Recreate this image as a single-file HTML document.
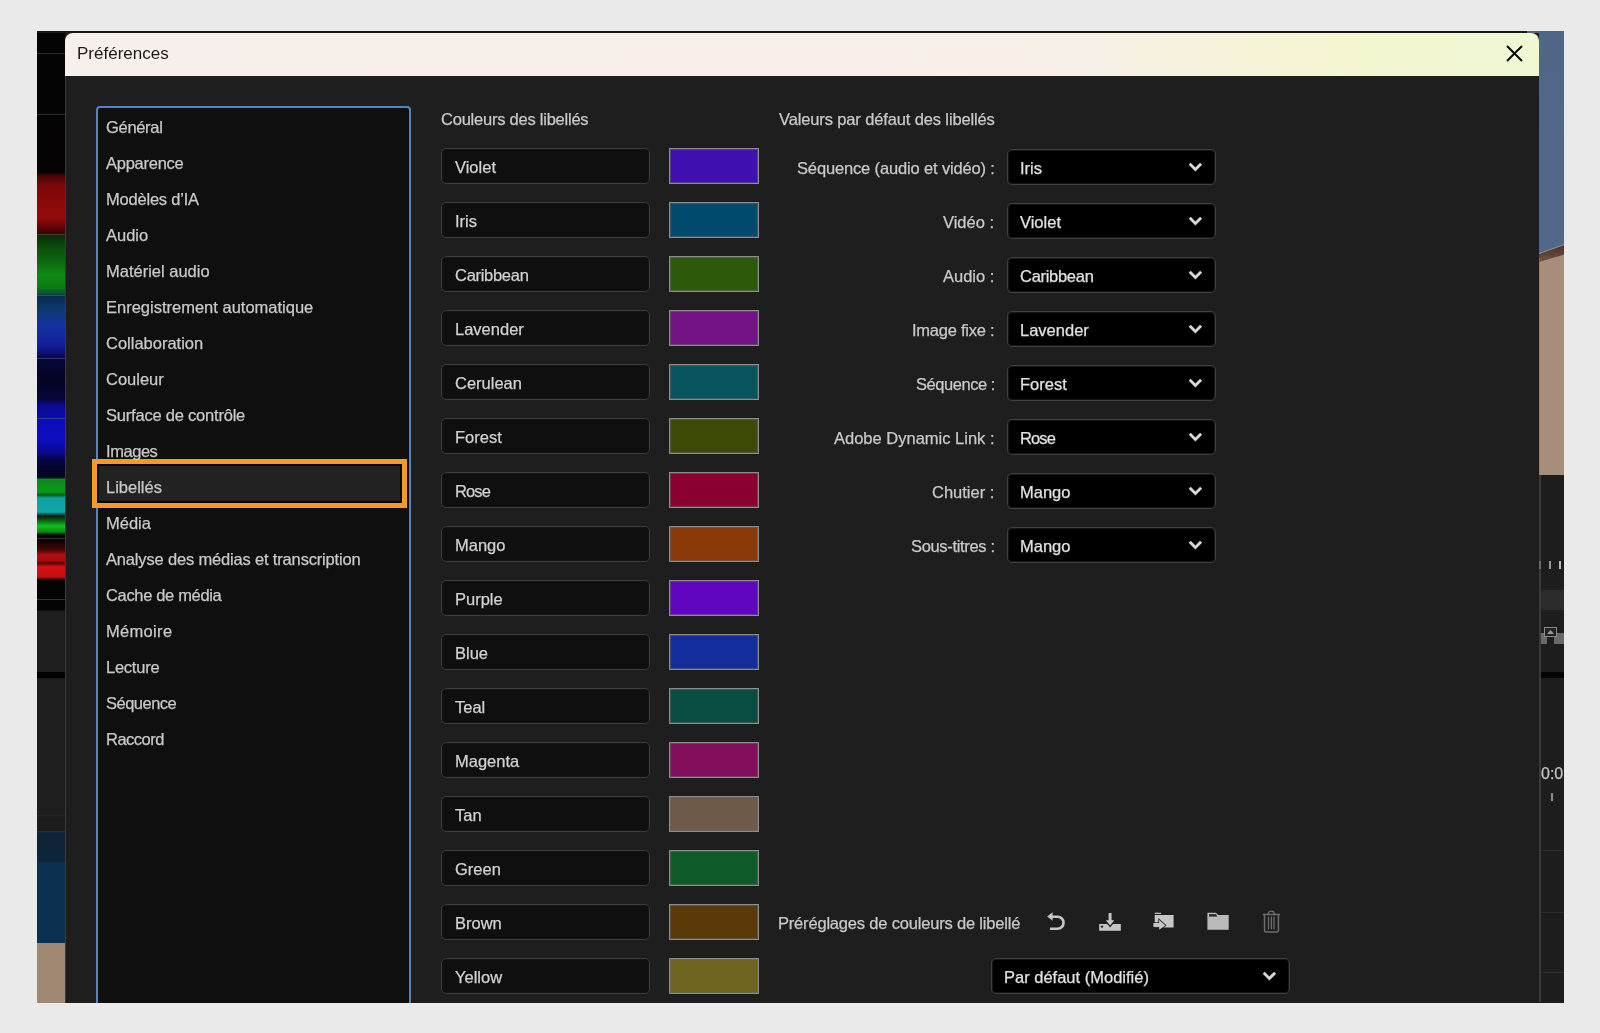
<!DOCTYPE html>
<html><head><meta charset="utf-8">
<style>
*{box-sizing:border-box;margin:0;padding:0}
html,body{width:1600px;height:1033px;overflow:hidden;background:#eaeaea;font-family:"Liberation Sans",sans-serif}
.a{position:absolute}
.tx{position:absolute;white-space:nowrap;will-change:transform;-webkit-text-stroke:0.25px currentColor}
</style></head>
<body>
<div class="a" style="left:0;top:0;width:1600px;height:1003px;overflow:hidden">
<div class="a" style="left:37px;top:31px;width:1527px;height:972px;background:#1d1d1d"></div>
<div class="a" style="left:37px;top:31px;width:28px;height:972px;background:linear-gradient(180deg,#040404 0px,#050303 141px,#4a0404 145px,#7a0808 154px,#8c0a0a 174px,#900b0b 187px,#6a0606 195px,#3a0404 202px,#0a2a0a 204px,#0a500c 217px,#0c6a10 231px,#0e8a12 244px,#0c7a14 257px,#0a4a40 263px,#0a2a50 265px,#0e3a70 279px,#1432a0 295px,#12209a 314px,#0a0a60 325px,#07073c 328px,#050522 349px,#060640 369px,#0a0a90 374px,#0c0ca8 386px,#0c0cb8 388px,#0e0ec0 409px,#0a0a90 421px,#05053a 431px,#040420 446px,#0a8a1a 449px,#0a9a1a 461px,#0a5a10 464px,#10a0a0 467px,#10a8a8 481px,#051a10 485px,#0a6a10 490px,#10c020 495px,#0a8a10 501px,#050505 504px,#070303 509px,#4a0505 519px,#b01010 524px,#a00c0c 530px,#5a0606 532px,#d81010 536px,#c01010 546px,#070303 549px,#040404 566px,#040404 579px,#1e1e1e 580px,#1e1e1e 641px,#000 641px,#000 647px,#1e1e1e 647px,#1e1e1e 784px,#2a2a2a 784px,#1c1c1c 786px,#1c1c1c 800px,#333 800px,#0e2438 802px,#0e2438 831px,#0c3050 831px,#0c3050 912px,#a08872 912px,#a08872 972px)"></div>
<div class="a" style="left:37px;top:234px;width:28px;height:1px;background:rgba(110,110,110,0.45)"></div>
<div class="a" style="left:37px;top:295px;width:28px;height:1px;background:rgba(110,110,110,0.45)"></div>
<div class="a" style="left:37px;top:358px;width:28px;height:1px;background:rgba(110,110,110,0.45)"></div>
<div class="a" style="left:37px;top:417.5px;width:28px;height:1px;background:rgba(110,110,110,0.45)"></div>
<div class="a" style="left:37px;top:478.5px;width:28px;height:1px;background:rgba(110,110,110,0.45)"></div>
<div class="a" style="left:37px;top:538px;width:28px;height:1px;background:rgba(110,110,110,0.45)"></div>
<div class="a" style="left:37px;top:598.5px;width:28px;height:1px;background:rgba(110,110,110,0.45)"></div>
<svg class="a" style="left:1525px;top:31px" width="39" height="444" viewBox="0 0 39 444"><defs><linearGradient id="sky" x1="0" y1="0" x2="0" y2="1"><stop offset="0" stop-color="#4f6787"/><stop offset="1" stop-color="#55698a"/></linearGradient><linearGradient id="roof" x1="0" y1="0" x2="0" y2="1"><stop offset="0" stop-color="#4a3028"/><stop offset="1" stop-color="#7a5c48"/></linearGradient></defs><rect width="39" height="444" fill="url(#sky)"/><path d="M0 235.1L39 223.6V444H0Z" fill="#a68e78"/><path d="M0 227.6L39 213.7V223.6L0 235.1Z" fill="url(#roof)"/><path d="M0 227.6L39 213.7" stroke="#9a9aa0" stroke-width="0.9"/><rect x="14" y="227" width="1" height="217" fill="#8a7a6a" opacity="0.6"/></svg>
<div class="a" style="left:37px;top:31px;width:1490px;height:2px;background:#1a1816"></div>
<div class="a" style="left:1539px;top:475px;width:2px;height:527px;background:#3a3a3a"></div>
<div class="a" style="left:1539.4px;top:561px;width:1.6px;height:8px;background:#6a6a6a"></div>
<div class="a" style="left:1549.4px;top:561px;width:1.6px;height:8px;background:#9a9a9a"></div>
<div class="a" style="left:1559.2px;top:561px;width:1.6px;height:8px;background:#bcbcbc"></div>
<div class="a" style="left:1541px;top:590px;width:23px;height:19.5px;background:#2c2c2c"></div>
<div class="a" style="left:1541px;top:633px;width:23px;height:10.5px;background:#6a6a6a"></div>
<div class="a" style="left:1544px;top:626.5px;width:13px;height:10px;border:1.3px solid #8a8a8a;background:#222"></div>
<div class="a" style="left:1547px;top:636.5px;width:7.3px;height:7px;background:#1e1e1e"></div>
<svg class="a" style="left:1546px;top:628px" width="9" height="7" viewBox="0 0 9 7"><path d="M1 6L4.5 2L8 6Z" fill="#9a9a9a"/></svg>
<div class="a" style="left:1541px;top:672px;width:23px;height:5.5px;background:#050505"></div>
<div class="a" style="left:1540.5px;top:760px;width:23.5px;height:24px;overflow:hidden"><div class="tx" style="left:0.3px;top:6.2px;font-size:16px;line-height:16px;color:#c4c4c4">0:0</div></div>
<div class="a" style="left:1550.8px;top:793px;width:2.2px;height:7.8px;background:#8c8c8c"></div>
<div class="a" style="left:1541px;top:850px;width:23px;height:1px;background:#2e2e2e"></div>
<div class="a" style="left:1541px;top:911.5px;width:23px;height:1px;background:#2e2e2e"></div>
<div class="a" style="left:1541px;top:972px;width:23px;height:1px;background:#2e2e2e"></div>
<div class="a" style="left:37px;top:53px;width:28px;height:1px;background:#2a2a2a"></div>
<div class="a" style="left:37px;top:113.5px;width:28px;height:1px;background:#2a2a2a"></div>
<div class="a" style="left:65px;top:33px;width:1474px;height:970px;background:#1e1e1e"></div>
<div class="a" style="left:65px;top:76px;width:1px;height:927px;background:#3a3a3a"></div>
<div class="a" style="left:65px;top:33px;width:1474px;height:43px;border-radius:8px 8px 0 0;background:linear-gradient(90deg,#f7efeb 0%,#f8efea 55%,#f7f0e6 70%,#f6f3d8 80%,#f4f6d0 88%,#eff7d3 100%)"></div>
<div class="tx" style="left:77px;top:44.61px;font-size:17px;line-height:17px;color:#1a1a1a;-webkit-text-stroke:0;">Préférences</div>
<svg class="a" style="left:1506px;top:45px" width="17" height="17" viewBox="0 0 17 17"><path d="M1 1L16 16M16 1L1 16" stroke="#050505" stroke-width="1.9" fill="none"/></svg>
<div class="a" style="left:96px;top:106px;width:315px;height:920px;background:#0f0f0f;border:2px solid #5384c2;border-radius:4px"></div>
<div class="a" style="left:92px;top:459px;width:315px;height:49px;border:5.3px solid #f39a2b;background:#080808"></div>
<div class="a" style="left:98.8px;top:465.5px;width:301.6px;height:35.5px;background:#222"></div>
<div class="tx" style="left:105.5px;top:119.33px;font-size:16.5px;line-height:16.5px;color:#c9c9c9;letter-spacing:-0.314px;">Général</div>
<div class="tx" style="left:105.5px;top:155.33px;font-size:16.5px;line-height:16.5px;color:#c9c9c9;letter-spacing:-0.256px;">Apparence</div>
<div class="tx" style="left:105.5px;top:191.33px;font-size:16.5px;line-height:16.5px;color:#c9c9c9;letter-spacing:-0.208px;">Modèles d’IA</div>
<div class="tx" style="left:105.5px;top:227.33px;font-size:16.5px;line-height:16.5px;color:#c9c9c9;">Audio</div>
<div class="tx" style="left:105.5px;top:263.33px;font-size:16.5px;line-height:16.5px;color:#c9c9c9;">Matériel audio</div>
<div class="tx" style="left:105.5px;top:299.33px;font-size:16.5px;line-height:16.5px;color:#c9c9c9;">Enregistrement automatique</div>
<div class="tx" style="left:105.5px;top:335.33px;font-size:16.5px;line-height:16.5px;color:#c9c9c9;">Collaboration</div>
<div class="tx" style="left:105.5px;top:371.33px;font-size:16.5px;line-height:16.5px;color:#c9c9c9;">Couleur</div>
<div class="tx" style="left:105.5px;top:407.33px;font-size:16.5px;line-height:16.5px;color:#c9c9c9;letter-spacing:-0.211px;">Surface de contrôle</div>
<div class="tx" style="left:105.5px;top:443.33px;font-size:16.5px;line-height:16.5px;color:#c9c9c9;letter-spacing:-0.450px;">Images</div>
<div class="tx" style="left:105.5px;top:479.33px;font-size:16.5px;line-height:16.5px;color:#c9c9c9;">Libellés</div>
<div class="tx" style="left:105.5px;top:515.33px;font-size:16.5px;line-height:16.5px;color:#c9c9c9;">Média</div>
<div class="tx" style="left:105.5px;top:551.33px;font-size:16.5px;line-height:16.5px;color:#c9c9c9;letter-spacing:-0.169px;">Analyse des médias et transcription</div>
<div class="tx" style="left:105.5px;top:587.33px;font-size:16.5px;line-height:16.5px;color:#c9c9c9;letter-spacing:-0.336px;">Cache de média</div>
<div class="tx" style="left:105.5px;top:623.33px;font-size:16.5px;line-height:16.5px;color:#c9c9c9;letter-spacing:0.314px;">Mémoire</div>
<div class="tx" style="left:105.5px;top:659.33px;font-size:16.5px;line-height:16.5px;color:#c9c9c9;letter-spacing:-0.243px;">Lecture</div>
<div class="tx" style="left:105.5px;top:695.33px;font-size:16.5px;line-height:16.5px;color:#c9c9c9;letter-spacing:-0.512px;">Séquence</div>
<div class="tx" style="left:105.5px;top:731.33px;font-size:16.5px;line-height:16.5px;color:#c9c9c9;letter-spacing:-0.514px;">Raccord</div>
<div class="tx" style="left:441px;top:111.33px;font-size:16.5px;line-height:16.5px;color:#c9c9c9;letter-spacing:-0.233px;">Couleurs des libellés</div>
<div class="tx" style="left:778.5px;top:111.33px;font-size:16.5px;line-height:16.5px;color:#c9c9c9;letter-spacing:-0.132px;">Valeurs par défaut des libellés</div>
<div class="a" style="left:441px;top:148px;width:209px;height:36px;background:#0f0f0f;border:1px solid #3c3c3c;border-radius:5px;box-shadow:inset 0 0 0 1px #141414"></div>
<div class="tx" style="left:455px;top:159.03px;font-size:16.5px;line-height:16.5px;color:#d2d2d2;">Violet</div>
<div class="a" style="left:669px;top:148px;width:90px;height:36px;background:#3f0fb0;border:1px solid #8c8c8c;box-shadow:inset 0 0 0 1px rgba(110,110,110,0.5)"></div>
<div class="a" style="left:441px;top:202px;width:209px;height:36px;background:#0f0f0f;border:1px solid #3c3c3c;border-radius:5px;box-shadow:inset 0 0 0 1px #141414"></div>
<div class="tx" style="left:455px;top:213.03px;font-size:16.5px;line-height:16.5px;color:#d2d2d2;">Iris</div>
<div class="a" style="left:669px;top:202px;width:90px;height:36px;background:#004a6e;border:1px solid #8c8c8c;box-shadow:inset 0 0 0 1px rgba(110,110,110,0.5)"></div>
<div class="a" style="left:441px;top:256px;width:209px;height:36px;background:#0f0f0f;border:1px solid #3c3c3c;border-radius:5px;box-shadow:inset 0 0 0 1px #141414"></div>
<div class="tx" style="left:455px;top:267.03px;font-size:16.5px;line-height:16.5px;color:#d2d2d2;letter-spacing:-0.289px;">Caribbean</div>
<div class="a" style="left:669px;top:256px;width:90px;height:36px;background:#2d5a0a;border:1px solid #8c8c8c;box-shadow:inset 0 0 0 1px rgba(110,110,110,0.5)"></div>
<div class="a" style="left:441px;top:310px;width:209px;height:36px;background:#0f0f0f;border:1px solid #3c3c3c;border-radius:5px;box-shadow:inset 0 0 0 1px #141414"></div>
<div class="tx" style="left:455px;top:321.03px;font-size:16.5px;line-height:16.5px;color:#d2d2d2;">Lavender</div>
<div class="a" style="left:669px;top:310px;width:90px;height:36px;background:#731285;border:1px solid #8c8c8c;box-shadow:inset 0 0 0 1px rgba(110,110,110,0.5)"></div>
<div class="a" style="left:441px;top:364px;width:209px;height:36px;background:#0f0f0f;border:1px solid #3c3c3c;border-radius:5px;box-shadow:inset 0 0 0 1px #141414"></div>
<div class="tx" style="left:455px;top:375.03px;font-size:16.5px;line-height:16.5px;color:#d2d2d2;">Cerulean</div>
<div class="a" style="left:669px;top:364px;width:90px;height:36px;background:#09555f;border:1px solid #8c8c8c;box-shadow:inset 0 0 0 1px rgba(110,110,110,0.5)"></div>
<div class="a" style="left:441px;top:418px;width:209px;height:36px;background:#0f0f0f;border:1px solid #3c3c3c;border-radius:5px;box-shadow:inset 0 0 0 1px #141414"></div>
<div class="tx" style="left:455px;top:429.03px;font-size:16.5px;line-height:16.5px;color:#d2d2d2;">Forest</div>
<div class="a" style="left:669px;top:418px;width:90px;height:36px;background:#3e4a08;border:1px solid #8c8c8c;box-shadow:inset 0 0 0 1px rgba(110,110,110,0.5)"></div>
<div class="a" style="left:441px;top:472px;width:209px;height:36px;background:#0f0f0f;border:1px solid #3c3c3c;border-radius:5px;box-shadow:inset 0 0 0 1px #141414"></div>
<div class="tx" style="left:455px;top:483.03px;font-size:16.5px;line-height:16.5px;color:#d2d2d2;letter-spacing:-0.875px;">Rose</div>
<div class="a" style="left:669px;top:472px;width:90px;height:36px;background:#8a0030;border:1px solid #8c8c8c;box-shadow:inset 0 0 0 1px rgba(110,110,110,0.5)"></div>
<div class="a" style="left:441px;top:526px;width:209px;height:36px;background:#0f0f0f;border:1px solid #3c3c3c;border-radius:5px;box-shadow:inset 0 0 0 1px #141414"></div>
<div class="tx" style="left:455px;top:537.03px;font-size:16.5px;line-height:16.5px;color:#d2d2d2;">Mango</div>
<div class="a" style="left:669px;top:526px;width:90px;height:36px;background:#8a3a06;border:1px solid #8c8c8c;box-shadow:inset 0 0 0 1px rgba(110,110,110,0.5)"></div>
<div class="a" style="left:441px;top:580px;width:209px;height:36px;background:#0f0f0f;border:1px solid #3c3c3c;border-radius:5px;box-shadow:inset 0 0 0 1px #141414"></div>
<div class="tx" style="left:455px;top:591.03px;font-size:16.5px;line-height:16.5px;color:#d2d2d2;">Purple</div>
<div class="a" style="left:669px;top:580px;width:90px;height:36px;background:#6005c0;border:1px solid #8c8c8c;box-shadow:inset 0 0 0 1px rgba(110,110,110,0.5)"></div>
<div class="a" style="left:441px;top:634px;width:209px;height:36px;background:#0f0f0f;border:1px solid #3c3c3c;border-radius:5px;box-shadow:inset 0 0 0 1px #141414"></div>
<div class="tx" style="left:455px;top:645.03px;font-size:16.5px;line-height:16.5px;color:#d2d2d2;">Blue</div>
<div class="a" style="left:669px;top:634px;width:90px;height:36px;background:#132d9c;border:1px solid #8c8c8c;box-shadow:inset 0 0 0 1px rgba(110,110,110,0.5)"></div>
<div class="a" style="left:441px;top:688px;width:209px;height:36px;background:#0f0f0f;border:1px solid #3c3c3c;border-radius:5px;box-shadow:inset 0 0 0 1px #141414"></div>
<div class="tx" style="left:455px;top:699.03px;font-size:16.5px;line-height:16.5px;color:#d2d2d2;">Teal</div>
<div class="a" style="left:669px;top:688px;width:90px;height:36px;background:#084c42;border:1px solid #8c8c8c;box-shadow:inset 0 0 0 1px rgba(110,110,110,0.5)"></div>
<div class="a" style="left:441px;top:742px;width:209px;height:36px;background:#0f0f0f;border:1px solid #3c3c3c;border-radius:5px;box-shadow:inset 0 0 0 1px #141414"></div>
<div class="tx" style="left:455px;top:753.03px;font-size:16.5px;line-height:16.5px;color:#d2d2d2;">Magenta</div>
<div class="a" style="left:669px;top:742px;width:90px;height:36px;background:#820e5c;border:1px solid #8c8c8c;box-shadow:inset 0 0 0 1px rgba(110,110,110,0.5)"></div>
<div class="a" style="left:441px;top:796px;width:209px;height:36px;background:#0f0f0f;border:1px solid #3c3c3c;border-radius:5px;box-shadow:inset 0 0 0 1px #141414"></div>
<div class="tx" style="left:455px;top:807.03px;font-size:16.5px;line-height:16.5px;color:#d2d2d2;">Tan</div>
<div class="a" style="left:669px;top:796px;width:90px;height:36px;background:#6e5a48;border:1px solid #8c8c8c;box-shadow:inset 0 0 0 1px rgba(110,110,110,0.5)"></div>
<div class="a" style="left:441px;top:850px;width:209px;height:36px;background:#0f0f0f;border:1px solid #3c3c3c;border-radius:5px;box-shadow:inset 0 0 0 1px #141414"></div>
<div class="tx" style="left:455px;top:861.03px;font-size:16.5px;line-height:16.5px;color:#d2d2d2;">Green</div>
<div class="a" style="left:669px;top:850px;width:90px;height:36px;background:#0e5c28;border:1px solid #8c8c8c;box-shadow:inset 0 0 0 1px rgba(110,110,110,0.5)"></div>
<div class="a" style="left:441px;top:904px;width:209px;height:36px;background:#0f0f0f;border:1px solid #3c3c3c;border-radius:5px;box-shadow:inset 0 0 0 1px #141414"></div>
<div class="tx" style="left:455px;top:915.03px;font-size:16.5px;line-height:16.5px;color:#d2d2d2;">Brown</div>
<div class="a" style="left:669px;top:904px;width:90px;height:36px;background:#5a3a08;border:1px solid #8c8c8c;box-shadow:inset 0 0 0 1px rgba(110,110,110,0.5)"></div>
<div class="a" style="left:441px;top:958px;width:209px;height:36px;background:#0f0f0f;border:1px solid #3c3c3c;border-radius:5px;box-shadow:inset 0 0 0 1px #141414"></div>
<div class="tx" style="left:455px;top:969.03px;font-size:16.5px;line-height:16.5px;color:#d2d2d2;">Yellow</div>
<div class="a" style="left:669px;top:958px;width:90px;height:36px;background:#6e6420;border:1px solid #8c8c8c;box-shadow:inset 0 0 0 1px rgba(110,110,110,0.5)"></div>
<div class="tx" style="right:605.35px;top:159.53px;font-size:16.5px;line-height:16.5px;color:#c9c9c9;text-align:right;letter-spacing:-0.148px;">Séquence (audio et vidéo) :</div>
<div class="a" style="left:1007px;top:149px;width:209px;height:36px;background:#000;border:1px solid #404040;border-radius:5px;box-shadow:inset 0 0 0 1px #161616"></div>
<div class="tx" style="left:1020px;top:159.53px;font-size:16.5px;line-height:16.5px;color:#e2e2e2;">Iris</div>
<svg class="a" style="left:1186px;top:160px" width="20" height="14" viewBox="0 0 20 14"><path d="M3.7 3.8L9.4 9.5L15.1 3.8" stroke="#d8d8d8" stroke-width="2.9" fill="none"/></svg>
<div class="tx" style="right:605.50px;top:213.53px;font-size:16.5px;line-height:16.5px;color:#c9c9c9;text-align:right;">Vidéo :</div>
<div class="a" style="left:1007px;top:203px;width:209px;height:36px;background:#000;border:1px solid #404040;border-radius:5px;box-shadow:inset 0 0 0 1px #161616"></div>
<div class="tx" style="left:1020px;top:213.53px;font-size:16.5px;line-height:16.5px;color:#e2e2e2;">Violet</div>
<svg class="a" style="left:1186px;top:214px" width="20" height="14" viewBox="0 0 20 14"><path d="M3.7 3.8L9.4 9.5L15.1 3.8" stroke="#d8d8d8" stroke-width="2.9" fill="none"/></svg>
<div class="tx" style="right:605.50px;top:267.53px;font-size:16.5px;line-height:16.5px;color:#c9c9c9;text-align:right;">Audio :</div>
<div class="a" style="left:1007px;top:257px;width:209px;height:36px;background:#000;border:1px solid #404040;border-radius:5px;box-shadow:inset 0 0 0 1px #161616"></div>
<div class="tx" style="left:1020px;top:267.53px;font-size:16.5px;line-height:16.5px;color:#e2e2e2;letter-spacing:-0.289px;">Caribbean</div>
<svg class="a" style="left:1186px;top:268px" width="20" height="14" viewBox="0 0 20 14"><path d="M3.7 3.8L9.4 9.5L15.1 3.8" stroke="#d8d8d8" stroke-width="2.9" fill="none"/></svg>
<div class="tx" style="right:605.25px;top:321.53px;font-size:16.5px;line-height:16.5px;color:#c9c9c9;text-align:right;letter-spacing:-0.250px;">Image fixe :</div>
<div class="a" style="left:1007px;top:311px;width:209px;height:36px;background:#000;border:1px solid #404040;border-radius:5px;box-shadow:inset 0 0 0 1px #161616"></div>
<div class="tx" style="left:1020px;top:321.53px;font-size:16.5px;line-height:16.5px;color:#e2e2e2;">Lavender</div>
<svg class="a" style="left:1186px;top:322px" width="20" height="14" viewBox="0 0 20 14"><path d="M3.7 3.8L9.4 9.5L15.1 3.8" stroke="#d8d8d8" stroke-width="2.9" fill="none"/></svg>
<div class="tx" style="right:605.05px;top:375.53px;font-size:16.5px;line-height:16.5px;color:#c9c9c9;text-align:right;letter-spacing:-0.450px;">Séquence :</div>
<div class="a" style="left:1007px;top:365px;width:209px;height:36px;background:#000;border:1px solid #404040;border-radius:5px;box-shadow:inset 0 0 0 1px #161616"></div>
<div class="tx" style="left:1020px;top:375.53px;font-size:16.5px;line-height:16.5px;color:#e2e2e2;">Forest</div>
<svg class="a" style="left:1186px;top:376px" width="20" height="14" viewBox="0 0 20 14"><path d="M3.7 3.8L9.4 9.5L15.1 3.8" stroke="#d8d8d8" stroke-width="2.9" fill="none"/></svg>
<div class="tx" style="right:605.50px;top:429.53px;font-size:16.5px;line-height:16.5px;color:#c9c9c9;text-align:right;">Adobe Dynamic Link :</div>
<div class="a" style="left:1007px;top:419px;width:209px;height:36px;background:#000;border:1px solid #404040;border-radius:5px;box-shadow:inset 0 0 0 1px #161616"></div>
<div class="tx" style="left:1020px;top:429.53px;font-size:16.5px;line-height:16.5px;color:#e2e2e2;letter-spacing:-0.875px;">Rose</div>
<svg class="a" style="left:1186px;top:430px" width="20" height="14" viewBox="0 0 20 14"><path d="M3.7 3.8L9.4 9.5L15.1 3.8" stroke="#d8d8d8" stroke-width="2.9" fill="none"/></svg>
<div class="tx" style="right:605.50px;top:483.53px;font-size:16.5px;line-height:16.5px;color:#c9c9c9;text-align:right;">Chutier :</div>
<div class="a" style="left:1007px;top:473px;width:209px;height:36px;background:#000;border:1px solid #404040;border-radius:5px;box-shadow:inset 0 0 0 1px #161616"></div>
<div class="tx" style="left:1020px;top:483.53px;font-size:16.5px;line-height:16.5px;color:#e2e2e2;">Mango</div>
<svg class="a" style="left:1186px;top:484px" width="20" height="14" viewBox="0 0 20 14"><path d="M3.7 3.8L9.4 9.5L15.1 3.8" stroke="#d8d8d8" stroke-width="2.9" fill="none"/></svg>
<div class="tx" style="right:605.17px;top:537.53px;font-size:16.5px;line-height:16.5px;color:#c9c9c9;text-align:right;letter-spacing:-0.331px;">Sous-titres :</div>
<div class="a" style="left:1007px;top:527px;width:209px;height:36px;background:#000;border:1px solid #404040;border-radius:5px;box-shadow:inset 0 0 0 1px #161616"></div>
<div class="tx" style="left:1020px;top:537.53px;font-size:16.5px;line-height:16.5px;color:#e2e2e2;">Mango</div>
<svg class="a" style="left:1186px;top:538px" width="20" height="14" viewBox="0 0 20 14"><path d="M3.7 3.8L9.4 9.5L15.1 3.8" stroke="#d8d8d8" stroke-width="2.9" fill="none"/></svg>
<div class="tx" style="left:777.5px;top:915.03px;font-size:16.5px;line-height:16.5px;color:#c9c9c9;letter-spacing:-0.188px;">Préréglages de couleurs de libellé</div>
<div class="a" style="left:990.5px;top:958px;width:299.5px;height:36px;background:#000;border:1px solid #404040;border-radius:5px;box-shadow:inset 0 0 0 1px #161616"></div>
<div class="tx" style="left:1004px;top:968.53px;font-size:16.5px;line-height:16.5px;color:#e2e2e2;">Par défaut (Modifié)</div>
<svg class="a" style="left:1259.5px;top:969px" width="20" height="14" viewBox="0 0 20 14"><path d="M3.7 3.8L9.4 9.5L15.1 3.8" stroke="#d8d8d8" stroke-width="2.9" fill="none"/></svg>
<svg class="a" style="left:1046px;top:911px" width="22" height="22" viewBox="0 0 22 22"><path d="M1.1 5.5L6.6 1.2V9.8Z" fill="#c6c6c6"/><path d="M6 5.8H11.6A5.95 5.95 0 0 1 11.6 17.7H4" stroke="#c6c6c6" stroke-width="2.6" fill="none"/></svg>
<svg class="a" style="left:1098px;top:911px" width="24" height="22" viewBox="0 0 24 22"><path d="M1.2 13H9.24L12.1 16.6L14.96 13H22.8V19.7H1.2Z" fill="#c6c6c6"/><circle cx="4" cy="15.6" r="1.2" fill="#1e1e1e"/><rect x="10.6" y="2" width="2.95" height="8" fill="#c6c6c6"/><path d="M7.9 9.2H16.3L12.1 14.5Z" fill="#c6c6c6"/></svg>
<svg class="a" style="left:1152px;top:911px" width="24" height="22" viewBox="0 0 24 22"><rect x="2.7" y="1.7" width="6.4" height="1.2" fill="#c6c6c6"/><rect x="2.7" y="4" width="18.9" height="12.5" fill="#c6c6c6"/><path d="M1.4 12.1H7.1V8.7L13.4 14.5L7.2 18.8V15.9H1.4Z" fill="#c6c6c6" stroke="#1e1e1e" stroke-width="1.5" paint-order="stroke" stroke-linejoin="miter"/></svg>
<svg class="a" style="left:1206px;top:911px" width="24" height="22" viewBox="0 0 24 22"><path d="M1.4 2.2Q1.4 1.7 1.9 1.7H9.9L12.3 4H22.7V18.8H1.4Z" fill="#bababa"/><path d="M3 3.3H10L11.3 5.6H3Z" fill="#1e1e1e"/></svg>
<svg class="a" style="left:1262px;top:910px" width="20" height="24" viewBox="0 0 20 24"><path d="M6.3 4Q6.3 1.2 9.25 1.2Q12.2 1.2 12.2 4" stroke="#6e6e6e" stroke-width="1.3" fill="none"/><path d="M0.7 4.5H18.1" stroke="#6e6e6e" stroke-width="1.5"/><path d="M2.5 4.8V20.6Q2.5 22 4 22H14.9Q16.4 22 16.4 20.6V4.8" stroke="#6e6e6e" stroke-width="1.5" fill="none"/><path d="M6.5 6.7V19.2M9.4 6.7V19.2M12 6.7V19.2" stroke="#6e6e6e" stroke-width="1.3"/></svg>
</div>
</body></html>
